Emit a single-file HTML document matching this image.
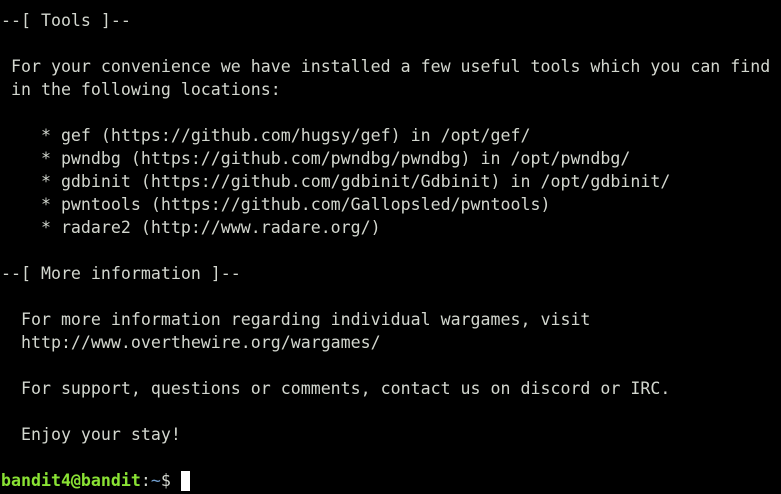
<!DOCTYPE html>
<html><head><style>
html,body{margin:0;padding:0;background:#000;width:781px;height:494px;overflow:hidden}
pre{margin:0;padding:9px 0 0 1px;font-family:"DejaVu Sans Mono","Liberation Mono",monospace;font-size:16.6px;line-height:23px;color:#d3d7cf;white-space:pre}
.g{color:#8ae234;font-weight:bold}
.b{color:#729fcf}
.c{display:inline-block;width:9px;height:20px;background:#fff;vertical-align:-5px}
</style></head><body><pre>--[ Tools ]--

 For your convenience we have installed a few useful tools which you can find
 in the following locations:

    * gef (https://github.com/hugsy/gef) in /opt/gef/
    * pwndbg (https://github.com/pwndbg/pwndbg) in /opt/pwndbg/
    * gdbinit (https://github.com/gdbinit/Gdbinit) in /opt/gdbinit/
    * pwntools (https://github.com/Gallopsled/pwntools)
    * radare2 (http://www.radare.org/)

--[ More information ]--

  For more information regarding individual wargames, visit
  http://www.overthewire.org/wargames/

  For support, questions or comments, contact us on discord or IRC.

  Enjoy your stay!

<span class="g">bandit4@bandit</span>:<span class="b">~</span>$ <span class="c"></span></pre></body></html>
